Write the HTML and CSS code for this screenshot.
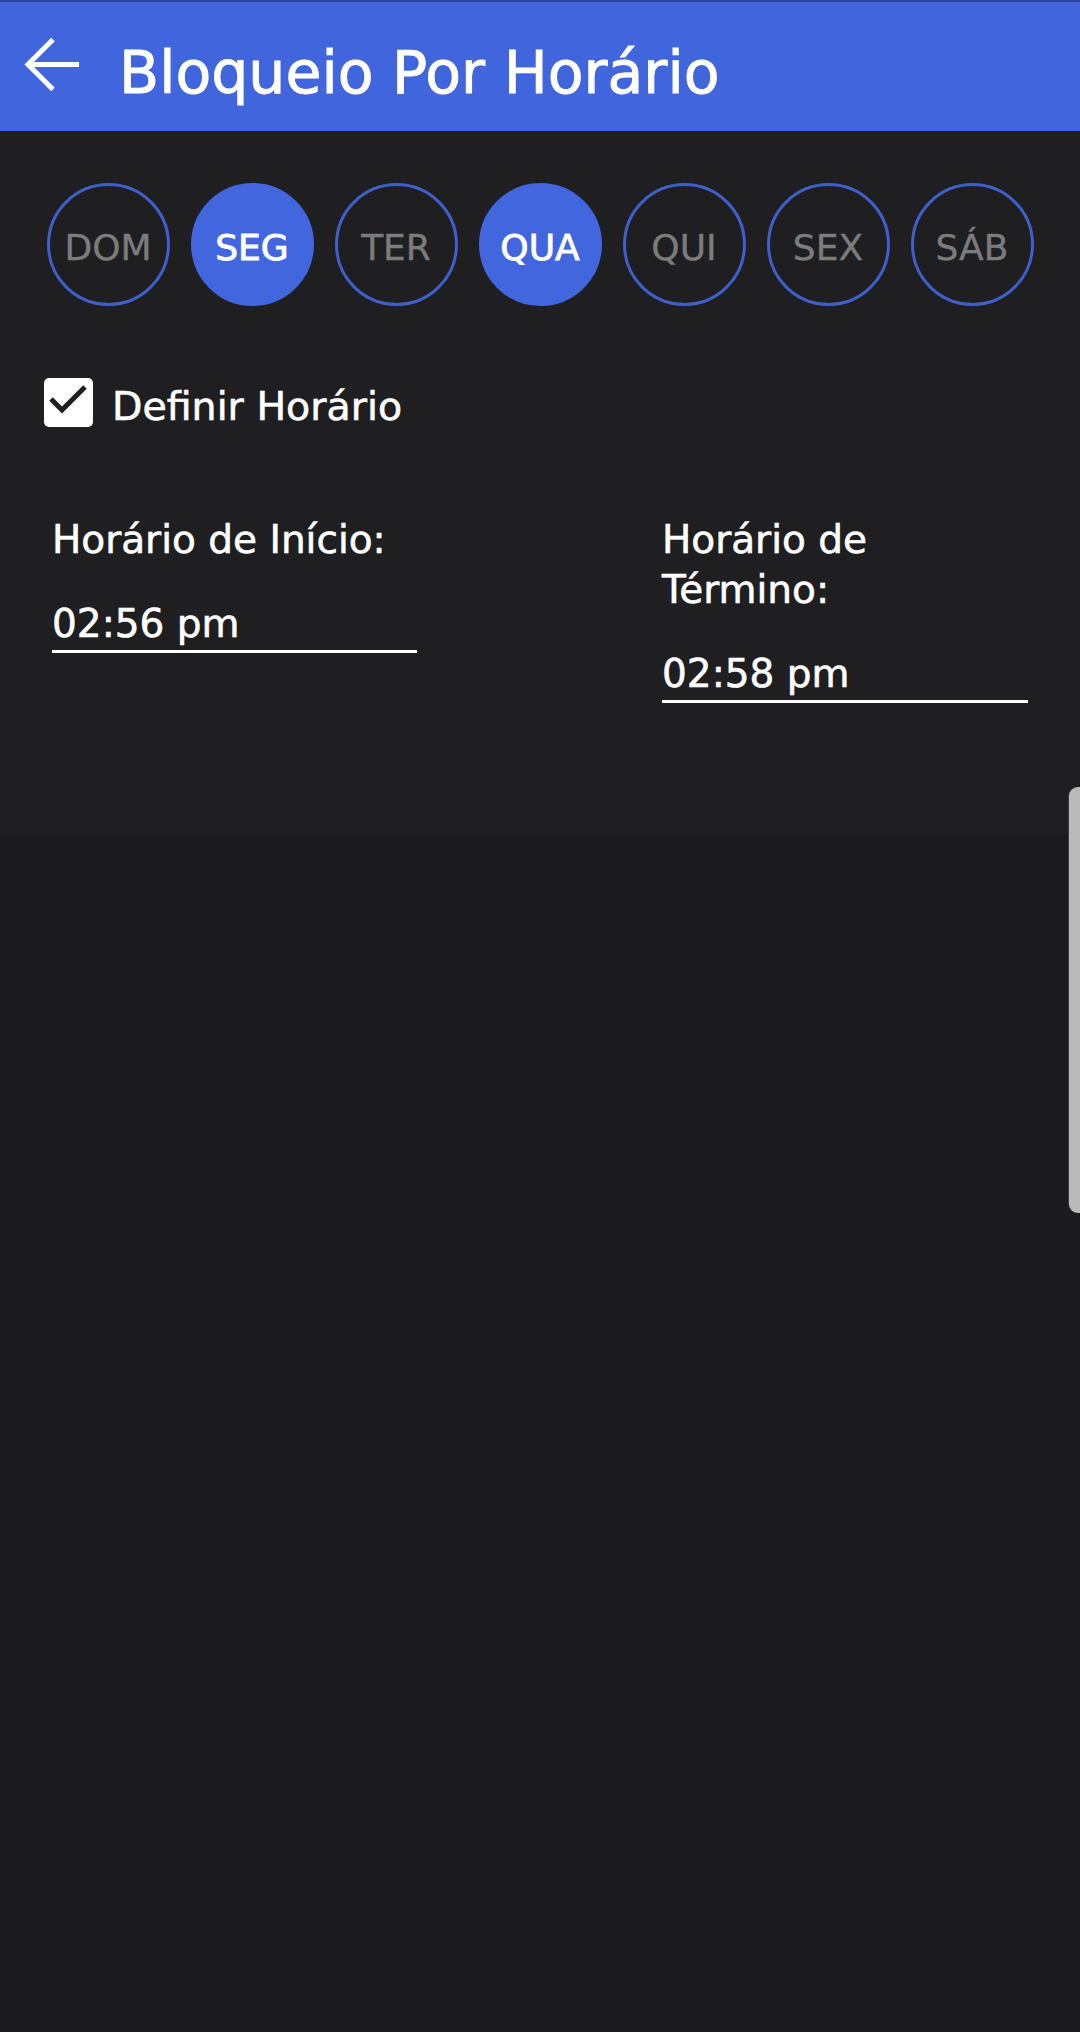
FILE: index.html
```html
<!DOCTYPE html>
<html lang="pt">
<head>
<meta charset="utf-8">
<title>Bloqueio Por Horário</title>
<link rel="stylesheet" href="styles.css">
</head>
<body>
<header class="appbar">
  <svg class="back" width="56" height="56" viewBox="0 0 56 56" aria-hidden="true">
    <path d="M55 27.5 H4 M29 2.5 L4 27.5 L29 52.5" fill="none" stroke="#ffffff" stroke-width="5" stroke-linecap="butt" stroke-linejoin="miter"/>
  </svg>
  <h1 class="title">Bloqueio Por Horário</h1>
</header>
<main class="panel">
  <div class="days">
    <div class="day">DOM</div>
    <div class="day on">SEG</div>
    <div class="day">TER</div>
    <div class="day on">QUA</div>
    <div class="day">QUI</div>
    <div class="day">SEX</div>
    <div class="day">SÁB</div>
  </div>
  <label class="check-row">
    <span class="box">
      <svg width="49" height="49" viewBox="0 0 49 49" aria-hidden="true">
        <path d="M7 32 L18 43 L41 20" transform="translate(0,-11)" fill="none" stroke="#1f1f21" stroke-width="5"/>
      </svg>
    </span>
    <span class="check-label">Definir Horário</span>
  </label>
  <div class="times">
    <div class="field">
      <div class="field-label">Horário de Início:</div>
      <div class="field-value">02:56 pm</div>
    </div>
    <div class="field">
      <div class="field-label">Horário de Término:</div>
      <div class="field-value">02:58 pm</div>
    </div>
  </div>
</main>
<div class="scrollbar"></div>
</body>
</html>
```
FILE: styles.css
```css
html, body {
  margin: 0;
  padding: 0;
}
body {
  background: #1b1b1d;
  font-family: "DejaVu Sans", "Liberation Sans", sans-serif;
  color: #ffffff;
  width: 1080px;
  height: 2032px;
  overflow: hidden;
  position: relative;
}
.appbar {
  box-sizing: border-box;
  height: 131px;
  border-top: 2px solid #2b44a0;
  background: #4165dd;
  display: flex;
  align-items: center;
  padding-left: 24px;
}
.back {
  display: block;
  flex: none;
  margin-top: -4px;
}
.title {
  margin: 0 0 0 39px;
  font-size: 58.5px;
  font-weight: normal;
  line-height: 1;
  padding-top: 13px;
  -webkit-text-stroke: 0.9px #ffffff;
}
.panel {
  background: #1f1f21;
  padding: 52px 0 131px;
}
.days {
  display: flex;
  justify-content: center;
  gap: 21px;
}
.day {
  box-sizing: border-box;
  width: 123px;
  height: 123px;
  border-radius: 50%;
  border: 3px solid #3e5fcc;
  display: flex;
  align-items: center;
  justify-content: center;
  font-size: 36px;
  color: #7c7c7c;
  padding-top: 6px;
  -webkit-text-stroke: 0.4px #7c7c7c;
}
.day.on {
  background: #4266dd;
  border-color: #4266dd;
  color: #ffffff;
  -webkit-text-stroke: 0.9px #ffffff;
}
.check-row {
  display: flex;
  align-items: center;
  margin: 72px 0 0 44px;
  gap: 19px;
  height: 49px;
}
.box {
  width: 49px;
  height: 49px;
  border-radius: 5px;
  background: #ffffff;
  display: block;
  flex: none;
}
.box svg {
  display: block;
}
.check-label {
  font-size: 39.5px;
  line-height: 50px;
  padding-top: 7px;
  -webkit-text-stroke: 0.6px #ffffff;
}
.times {
  display: grid;
  grid-template-columns: 365px 366px;
  justify-content: space-between;
  align-items: start;
  padding: 0 52px;
  margin-top: 88px;
}
.field-label {
  font-size: 39px;
  line-height: 50px;
  -webkit-text-stroke: 0.6px #ffffff;
}
.field-value {
  margin-top: 34px;
  font-size: 39px;
  line-height: 50px;
  padding-bottom: 1px;
  border-bottom: 3px solid #ffffff;
  -webkit-text-stroke: 0.6px #ffffff;
}
.scrollbar {
  position: absolute;
  right: 0;
  top: 787px;
  width: 11px;
  height: 426px;
  background: #bababa;
  border-radius: 9px 0 0 9px;
  box-shadow: -1px 0 0 #3a3a3a;
}
```
